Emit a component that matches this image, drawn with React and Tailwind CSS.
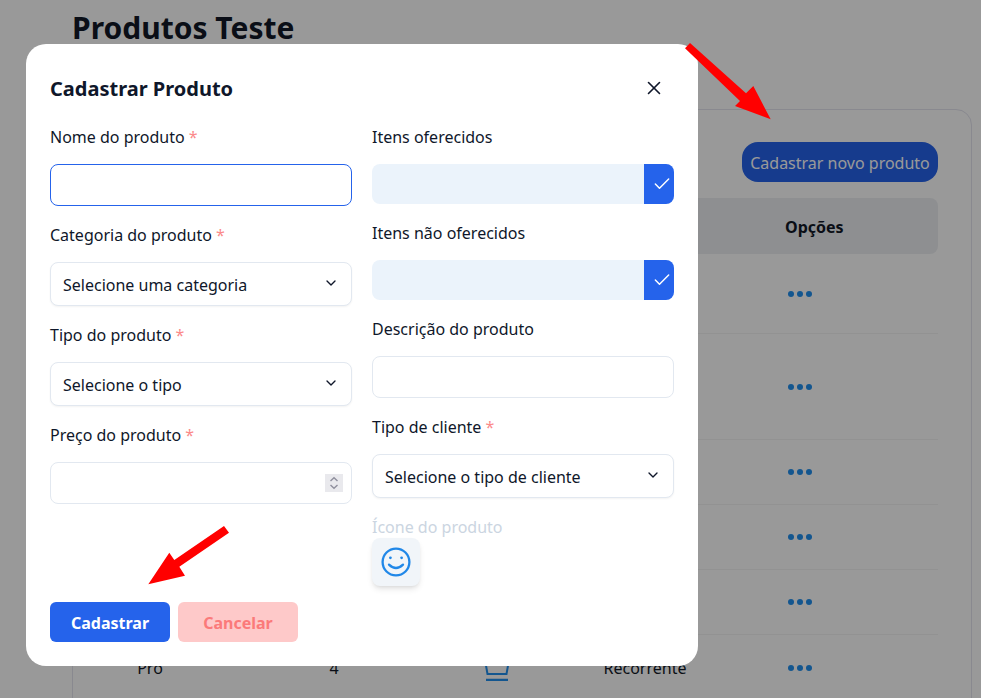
import React from "react";
import { ChevronDown, Check, X } from "lucide-react";

function Dots() {
  return (
    <div className="flex gap-[3px]">
      <span className="w-[6px] h-[6px] rounded-full bg-[#218fee]" />
      <span className="w-[6px] h-[6px] rounded-full bg-[#218fee]" />
      <span className="w-[6px] h-[6px] rounded-full bg-[#218fee]" />
    </div>
  );
}

function Row({ h, last, children }) {
  return (
    <div className={`grid grid-cols-[88px_280px_46px_250px_168px] items-center ${h} ${last ? "" : "border-b border-[#f4f4f4]"}`}>
      {children}
      <div className="pl-[18px] col-start-5"><Dots /></div>
    </div>
  );
}

function Label({ children, req, muted }) {
  return (
    <label className={`block h-6 leading-6 text-base ${muted ? "text-[#cbd5e1]" : "text-[#0f172a]"}`}>
      {children}
      {req && <span className="text-[#fb8a8a]"> *</span>}
    </label>
  );
}

function SelectBox({ children }) {
  return (
    <div className="h-11 px-3 flex items-center justify-between rounded-lg border border-[#e2e8f0] bg-white shadow-[0_1px_2px_rgba(0,0,0,0.05)] text-base text-[#0f172a]">
      <span className="pt-[2px]">{children}</span>
      <ChevronDown size={16} strokeWidth={2} className="text-[#0f172a] -translate-y-px" />
    </div>
  );
}

function Toggle() {
  return (
    <div className="h-10 flex rounded-lg overflow-hidden bg-[#ebf3fb]">
      <div className="flex-1" />
      <div className="w-[30px] bg-[#2563eb] flex items-center justify-center pl-[5px]">
        <Check size={20} strokeWidth={1.75} className="text-white" />
      </div>
    </div>
  );
}

export default function App() {
  return (
    <div className="relative w-[981px] h-[698px] overflow-hidden bg-white font-['Noto_Sans',sans-serif]">
      {/* page under the overlay */}
      <div className="pl-[72px] pr-[9px]">
        <h1 className="h-[109px] pt-[7px] text-[30px] leading-[42px] font-bold text-[#111827]">Produtos Teste</h1>
        <div className="h-[700px] rounded-t-2xl border border-[#e4e4ef] pt-8 px-[33px]">
          <div className="flex justify-end">
            <button className="h-10 w-[196px] pt-px rounded-2xl bg-[#2563eb] text-white text-base">Cadastrar novo produto</button>
          </div>
          <div className="mt-4 h-14 pt-px rounded-lg bg-[#edeff2] grid grid-cols-[88px_280px_46px_250px_168px] items-center font-bold text-base text-[#111827]">
            <div className="col-start-5 pl-[15px]">Opções</div>
          </div>
          <Row h="h-20" />
          <Row h="h-[106px]" />
          <Row h="h-[65px]" />
          <Row h="h-[65px]" />
          <Row h="h-[65px]" />
          <Row h="h-[65px]" last>
            <div className="text-center text-base text-[#111827]">Pro</div>
            <div className="text-center text-base text-[#111827]">4</div>
            <div className="flex justify-center">
              <svg width="26" height="26" viewBox="0 0 26 26" fill="none" stroke="#218fee" strokeWidth="2">
                <path d="M1 5 L3.5 19 L22.5 19 L25 5" />
                <path d="M2 25 H24" strokeWidth="2.5" />
              </svg>
            </div>
            <div className="text-center text-base text-[#111827]">Recorrente</div>
          </Row>
        </div>
      </div>

      {/* overlay */}
      <div className="absolute inset-0 bg-black/40" />

      {/* modal */}
      <div className="absolute left-[26px] top-[44px] w-[672px] h-[622px] rounded-[20px] bg-white p-6 flex flex-col">
        <div className="flex items-center justify-between h-10">
          <h2 className="text-[20px] pt-px font-bold text-[#0f172a]">Cadastrar Produto</h2>
          <X size={22} strokeWidth={1.75} className="text-[#0f172a] mr-[9px]" />
        </div>
        <div className="mt-[17px] grid grid-cols-2 gap-x-5 flex-1">
          <div>
            <Label req>Nome do produto</Label>
            <div className="mt-[15px] h-[42px] rounded-lg border border-[#2563eb] bg-white" />
            <div className="mt-[17px]"><Label req>Categoria do produto</Label></div>
            <div className="mt-[15px]"><SelectBox>Selecione uma categoria</SelectBox></div>
            <div className="mt-[17px]"><Label req>Tipo do produto</Label></div>
            <div className="mt-[15px]"><SelectBox>Selecione o tipo</SelectBox></div>
            <div className="mt-[17px]"><Label req>Preço do produto</Label></div>
            <div className="mt-[15px] h-[42px] rounded-lg border border-[#e2e8f0] bg-white flex items-center justify-end pr-2">
              <svg width="18" height="18" viewBox="0 0 18 18" fill="none" stroke="#8f8f9d" strokeWidth="1.4" className="bg-[#e9e9ed]">
                <path d="M5.5 7 L9 3.8 L12.5 7" />
                <path d="M5.5 11 L9 14.2 L12.5 11" />
              </svg>
            </div>
          </div>
          <div>
            <Label>Itens oferecidos</Label>
            <div className="mt-[15px]"><Toggle /></div>
            <div className="mt-[17px]"><Label>Itens não oferecidos</Label></div>
            <div className="mt-[15px]"><Toggle /></div>
            <div className="mt-[17px]"><Label>Descrição do produto</Label></div>
            <div className="mt-[15px] h-[42px] rounded-lg border border-[#e2e8f0] bg-white" />
            <div className="mt-[17px]"><Label req>Tipo de cliente</Label></div>
            <div className="mt-[15px]"><SelectBox>Selecione o tipo de cliente</SelectBox></div>
            <div className="mt-[17px]"><Label muted>Ícone do produto</Label></div>
            <div className="-mt-px w-12 h-12 rounded-lg bg-[#f1f5f9] shadow-md flex items-center justify-center">
              <svg width="32" height="32" viewBox="-16 -16 32 32" fill="none" stroke="#2188e8" strokeWidth="2.3" strokeLinecap="round">
                <circle cx="0" cy="0" r="13.4" />
                <circle cx="-5.6" cy="-4.2" r="1.4" fill="#2188e8" stroke="none" />
                <circle cx="5.6" cy="-4.2" r="1.4" fill="#2188e8" stroke="none" />
                <path d="M-7 2.6 Q0 9.4 7 2.6" />
              </svg>
            </div>
          </div>
        </div>
        <div className="flex gap-2">
          <button className="w-[120px] h-10 pt-[2px] rounded-md bg-[#2563eb] text-white font-bold text-base">Cadastrar</button>
          <button className="w-[120px] h-10 pt-[2px] rounded-md bg-[#fec9c9] text-[#fb7a7a] font-bold text-base">Cancelar</button>
        </div>
      </div>

      {/* annotation arrows */}
      <svg className="absolute inset-0 pointer-events-none" width="981" height="698" viewBox="0 0 981 698">
        <polygon fill="#ff0000" points="685,48.3 690,43 746,93.3 753.3,86 770.7,119.3 735,106 740,101" />
        <polygon fill="#ff0000" points="224,526 229,532.7 179.3,566.7 185,575.7 148.3,584.3 169.3,552.7 174.3,560" />
      </svg>
    </div>
  );
}
